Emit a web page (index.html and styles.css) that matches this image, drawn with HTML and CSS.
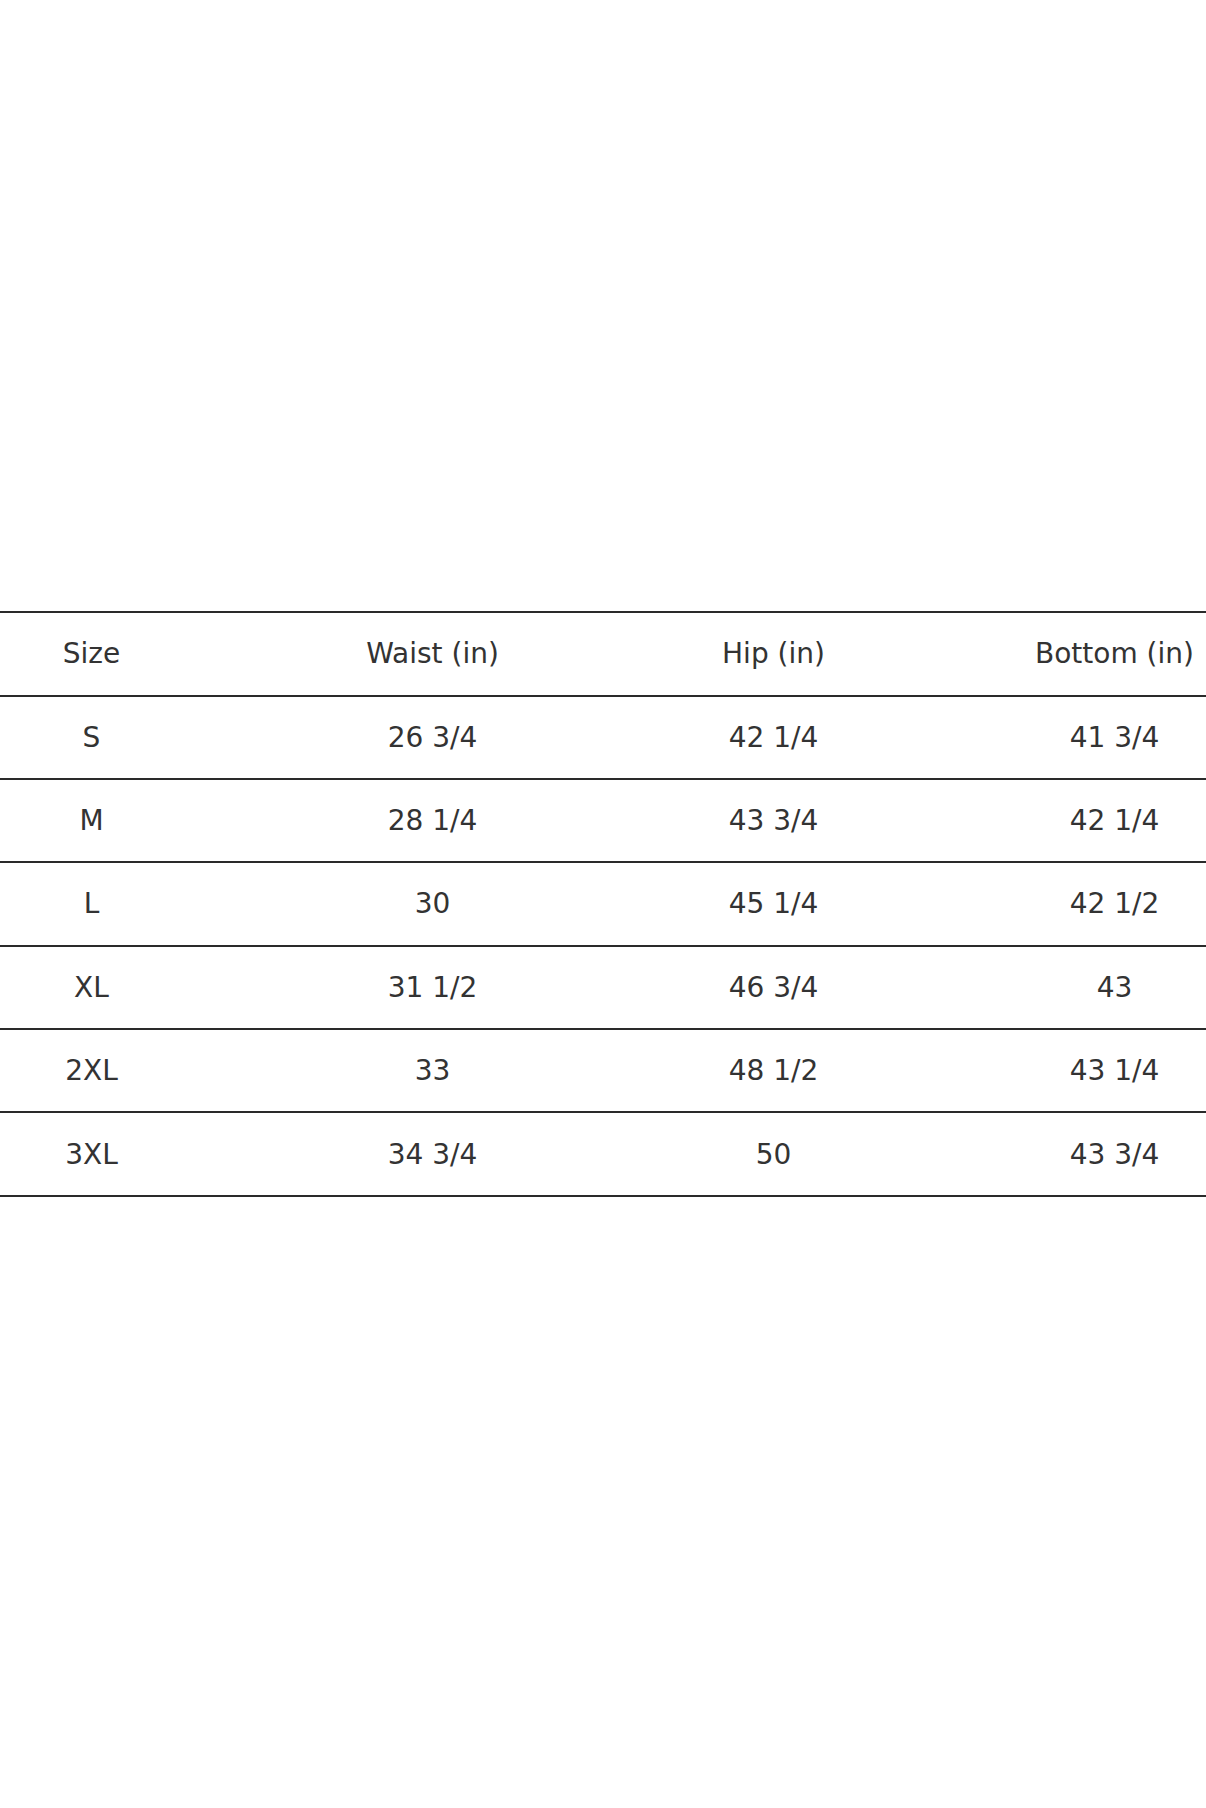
FILE: index.html
```html
<!DOCTYPE html>
<html lang="en">
<head>
<meta charset="utf-8">
<title>Size Chart</title>
<link rel="stylesheet" href="styles.css">
</head>
<body>
<main class="page">
  <table class="size-chart">
    <thead>
      <tr><th>Size</th><th>Waist (in)</th><th>Hip (in)</th><th>Bottom (in)</th></tr>
    </thead>
    <tbody>
      <tr><td>S</td><td>26 3/4</td><td>42 1/4</td><td>41 3/4</td></tr>
      <tr><td>M</td><td>28 1/4</td><td>43 3/4</td><td>42 1/4</td></tr>
      <tr><td>L</td><td>30</td><td>45 1/4</td><td>42 1/2</td></tr>
      <tr><td>XL</td><td>31 1/2</td><td>46 3/4</td><td>43</td></tr>
      <tr><td>2XL</td><td>33</td><td>48 1/2</td><td>43 1/4</td></tr>
      <tr><td>3XL</td><td>34 3/4</td><td>50</td><td>43 3/4</td></tr>
    </tbody>
  </table>
</main>
</body>
</html>
```
FILE: styles.css
```css
html, body {
  margin: 0;
  padding: 0;
  background: #ffffff;
  overflow: hidden;
}

.page {
  min-height: 100vh;
  display: flex;
  align-items: center;
  justify-content: center;
}

.size-chart {
  flex: none;
  width: 1364px;
  table-layout: fixed;
  border-collapse: collapse;
  font-family: "DejaVu Sans", sans-serif;
  font-size: 28px;
  color: #333333;
}

.size-chart th,
.size-chart td {
  height: 83.4px;
  padding: 0;
  text-align: center;
  vertical-align: middle;
  font-weight: normal;
  border-top: 2px solid #2a2a2a;
  border-bottom: 2px solid #2a2a2a;
  box-sizing: border-box;
}
```
